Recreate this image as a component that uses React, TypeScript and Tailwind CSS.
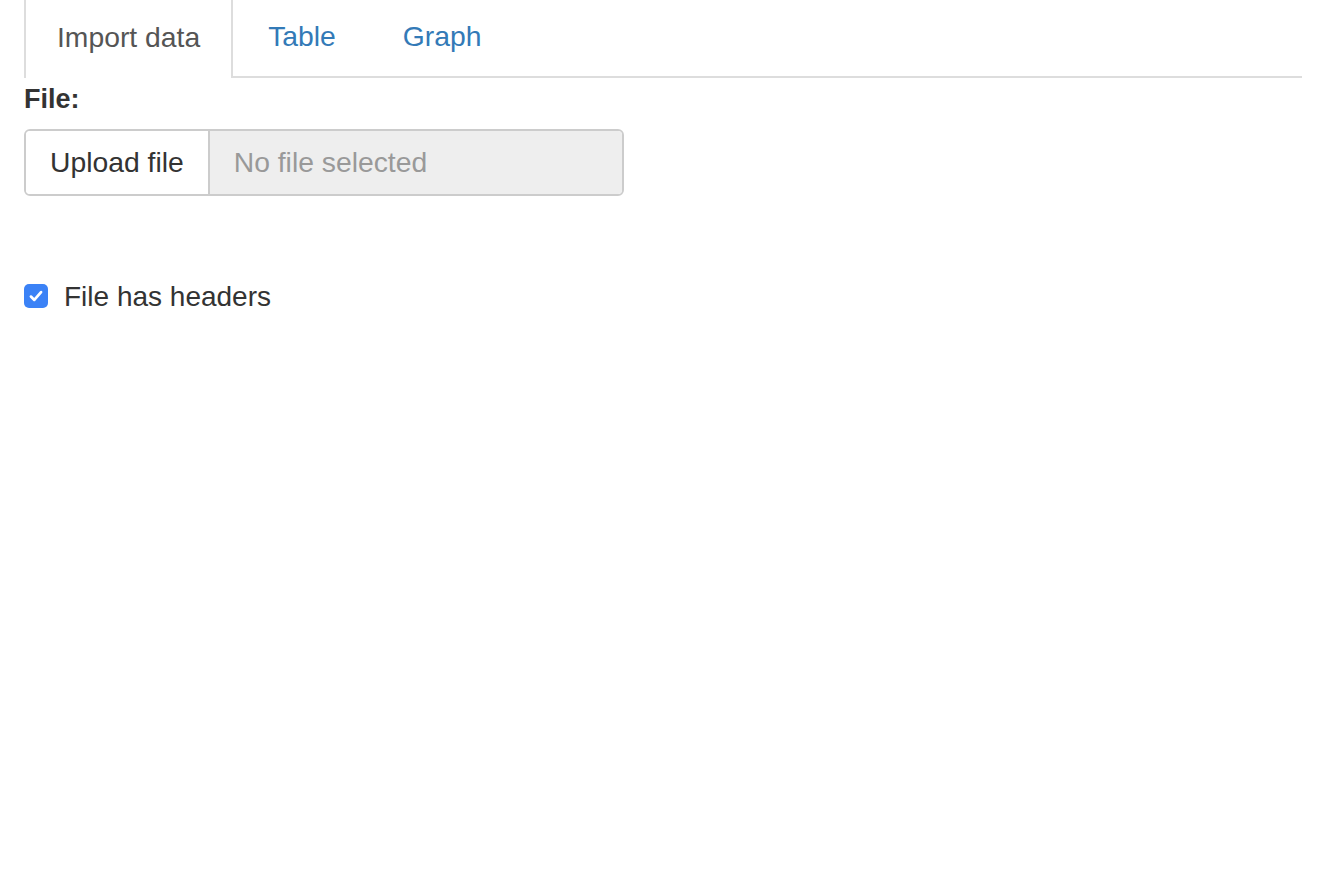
export default function App() {
  return (
    <div className="min-h-screen bg-white px-6 font-['Liberation_Sans',Arial,sans-serif] text-[#333]">
      <ul className="flex h-[78px] border-b-2 border-[#ddd]">
        <li className="-mb-[2px] flex h-[78px] items-center border-x-2 border-[#ddd] bg-white px-[31px] pb-[4px] text-[28.3px] text-[#555]">
          Import data
        </li>
        <li className="flex items-center border-x-2 border-transparent pl-[33px] pr-[31px] pb-[4px] text-[28.3px] text-[#337ab7]">
          Table
        </li>
        <li className="flex items-center border-x-2 border-transparent pl-[32px] pr-[33px] pb-[4px] text-[28.3px] text-[#337ab7]">
          Graph
        </li>
      </ul>
      <div className="pt-[6px]">
        <label className="block text-[27px] font-bold leading-[30px]">File:</label>
        <div className="mt-[15px] flex h-[67px] w-[600px] overflow-hidden rounded-[6px] border-2 border-[#ccc]">
          <div className="flex items-center border-r-2 border-[#ccc] bg-white px-[24px] text-[28.3px]">
            Upload file
          </div>
          <div className="flex flex-1 items-center bg-[#eee] px-[24px] text-[28.3px] text-[#999]">
            No file selected
          </div>
        </div>
      </div>
      <div className="mt-[80px] flex items-center gap-[16px]">
        <span className="-mt-[2px] flex h-[24px] w-[24px] items-center justify-center rounded-[5px] bg-[#3b82f6]">
          <svg width="18" height="18" viewBox="0 0 16 16" fill="none">
            <path d="M3.5 8.5 L6.5 11.5 L12.5 4.5" stroke="white" strokeWidth="2.4" strokeLinecap="round" strokeLinejoin="round" />
          </svg>
        </span>
        <span className="text-[28px]">File has headers</span>
      </div>
    </div>
  );
}
